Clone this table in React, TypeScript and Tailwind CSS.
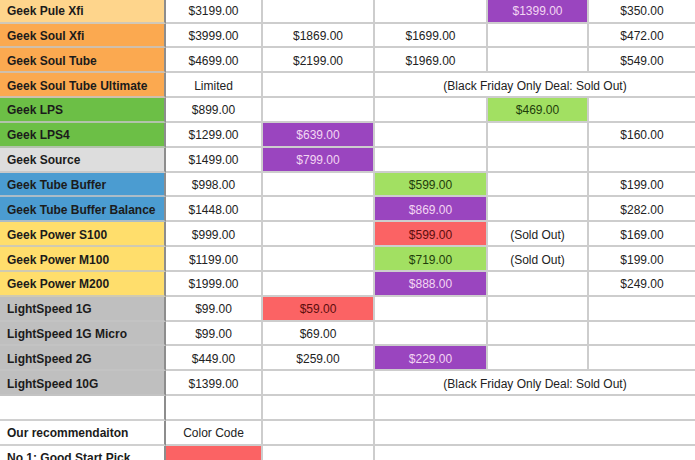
import React from "react";

type Cell = { t?: string; bg?: string; fg?: string; span?: number };
type Row = { label: string; lbg: string; cells: Cell[] };

const PURPLE = "bg-[#9a45bf]";
const PURPLE_T = "text-[#f3d6f3]";
const LGREEN = "bg-[#a2e062]";
const LGREEN_T = "text-[#1f3d0c]";
const RED = "bg-[#fb6364]";
const RED_T = "text-[#5c0d0d]";
const BF = "(Black Friday Only Deal: Sold Out)";

const rows: Row[] = [
  { label: "Geek Pule Xfi", lbg: "bg-[#fed58c]", cells: [{ t: "$3199.00" }, {}, {}, { t: "$1399.00", bg: PURPLE, fg: PURPLE_T }, { t: "$350.00" }] },
  { label: "Geek Soul Xfi", lbg: "bg-[#fba950]", cells: [{ t: "$3999.00" }, { t: "$1869.00" }, { t: "$1699.00" }, {}, { t: "$472.00" }] },
  { label: "Geek Soul Tube", lbg: "bg-[#fba950]", cells: [{ t: "$4699.00" }, { t: "$2199.00" }, { t: "$1969.00" }, {}, { t: "$549.00" }] },
  { label: "Geek Soul Tube Ultimate", lbg: "bg-[#fba950]", cells: [{ t: "Limited" }, {}, { t: BF, span: 3 }] },
  { label: "Geek LPS", lbg: "bg-[#6cbf46]", cells: [{ t: "$899.00" }, {}, {}, { t: "$469.00", bg: LGREEN, fg: LGREEN_T }, {}] },
  { label: "Geek LPS4", lbg: "bg-[#6cbf46]", cells: [{ t: "$1299.00" }, { t: "$639.00", bg: PURPLE, fg: PURPLE_T }, {}, {}, { t: "$160.00" }] },
  { label: "Geek Source", lbg: "bg-[#dddddd]", cells: [{ t: "$1499.00" }, { t: "$799.00", bg: PURPLE, fg: PURPLE_T }, {}, {}, {}] },
  { label: "Geek Tube Buffer", lbg: "bg-[#4b9cd1]", cells: [{ t: "$998.00" }, {}, { t: "$599.00", bg: LGREEN, fg: LGREEN_T }, {}, { t: "$199.00" }] },
  { label: "Geek Tube Buffer Balance", lbg: "bg-[#4b9cd1]", cells: [{ t: "$1448.00" }, {}, { t: "$869.00", bg: PURPLE, fg: PURPLE_T }, {}, { t: "$282.00" }] },
  { label: "Geek Power S100", lbg: "bg-[#ffde6c]", cells: [{ t: "$999.00" }, {}, { t: "$599.00", bg: RED, fg: RED_T }, { t: "(Sold Out)" }, { t: "$169.00" }] },
  { label: "Geek Power M100", lbg: "bg-[#ffde6c]", cells: [{ t: "$1199.00" }, {}, { t: "$719.00", bg: LGREEN, fg: LGREEN_T }, { t: "(Sold Out)" }, { t: "$199.00" }] },
  { label: "Geek Power M200", lbg: "bg-[#ffde6c]", cells: [{ t: "$1999.00" }, {}, { t: "$888.00", bg: PURPLE, fg: PURPLE_T }, {}, { t: "$249.00" }] },
  { label: "LightSpeed 1G", lbg: "bg-[#bfbfbf]", cells: [{ t: "$99.00" }, { t: "$59.00", bg: RED, fg: RED_T }, {}, {}, {}] },
  { label: "LightSpeed 1G Micro", lbg: "bg-[#bfbfbf]", cells: [{ t: "$99.00" }, { t: "$69.00" }, {}, {}, {}] },
  { label: "LightSpeed 2G", lbg: "bg-[#bfbfbf]", cells: [{ t: "$449.00" }, { t: "$259.00" }, { t: "$229.00", bg: PURPLE, fg: PURPLE_T }, {}, {}] },
  { label: "LightSpeed 10G", lbg: "bg-[#bfbfbf]", cells: [{ t: "$1399.00" }, {}, { t: BF, span: 3 }] },
  { label: "", lbg: "bg-white", cells: [{}, {}, { span: 3 }] },
  { label: "Our recommendaiton", lbg: "bg-white", cells: [{ t: "Color Code" }, {}, { span: 3 }] },
  { label: "No 1: Good Start Pick", lbg: "bg-white", cells: [{ bg: RED }, {}, { span: 3 }] },
];

export default function App() {
  return (
    <div className="w-[695px] h-[460px] overflow-hidden bg-white" style={{ fontFamily: '"Liberation Sans", Arial, sans-serif' }}>
      <div className="grid grid-cols-[166px_97px_112px_113px_101px_106px] -mt-[1px]">
        {rows.map((r, i) => {
          const h = i === 0 ? "h-[24.5px]" : "h-[24.85px]";
          return (
            <React.Fragment key={i}>
              <div className={`${h} ${r.lbg} border-b-2 border-b-[#c4c4c4]/80 border-r-2 border-r-[#8d8d8d] flex items-center pl-[7px] pt-[2px] text-[12px] font-bold text-[#1b1b1b] whitespace-nowrap`}>
                {r.label}
              </div>
              {r.cells.map((c, j) => {
                const span = c.span === 3 ? "col-span-3" : "";
                const isLast = j === r.cells.length - 1;
                return (
                  <div
                    key={j}
                    className={`${h} ${span} ${c.bg ?? "bg-white"} ${c.fg ?? "text-[#222222]"} border-b-2 border-b-[#cdcdcd] ${isLast ? "" : "border-r-2 border-r-[#cdcdcd]"} flex items-center justify-center pt-[2px] text-[12px] whitespace-nowrap`}
                  >
                    {c.t ?? ""}
                  </div>
                );
              })}
            </React.Fragment>
          );
        })}
      </div>
    </div>
  );
}
